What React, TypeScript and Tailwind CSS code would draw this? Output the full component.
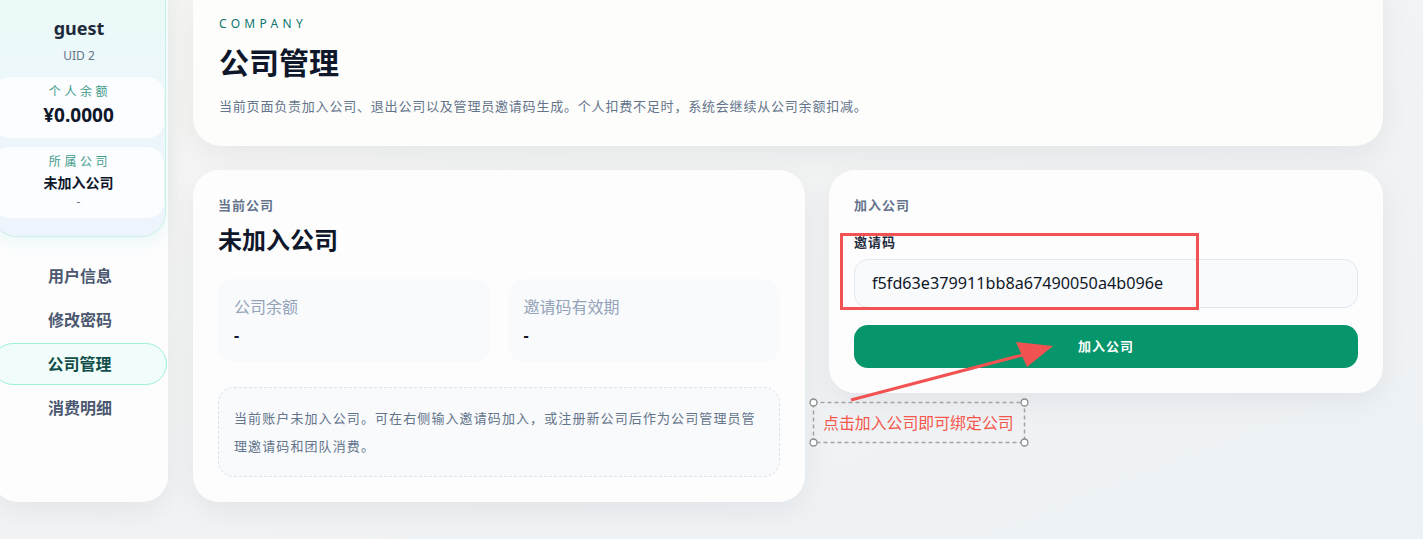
import React from "react";

const navItems = ["用户信息", "修改密码", "公司管理", "消费明细"];

function Sidebar() {
  return (
    <aside className="-ml-[8px] w-[176px] shrink-0 self-start rounded-[26px] bg-[#fdfdfe] pb-[73px] shadow-[0_10px_30px_rgba(15,23,42,0.06)]">
      {/* profile block */}
      <div className="mr-[2px] rounded-[24px] border border-[#c8f1ea] bg-gradient-to-b from-[#ebfaf8] to-[#eef4fc] pb-[18px] pt-[39px] shadow-[0_6px_16px_rgba(20,184,166,0.08)]">
        <div className="text-center text-[18px] font-bold leading-[24px] text-[#1e293b]">guest</div>
        <div className="mt-[8px] text-center text-[12px] leading-[16px] text-[#64748b]">UID 2</div>
        <div className="mr-[1px] mt-[13px] rounded-[16px] bg-[#fbfdff] pb-[10px] pt-[7px] text-center">
          <div className="pl-[3px] text-[12px] leading-[16px] tracking-[0.3em] text-[#3f9c8a]">个人余额</div>
          <div className="mt-[3px] text-[19px] font-bold leading-[25px] text-[#0f172a]">¥0.0000</div>
        </div>
        <div className="mr-[1px] mt-[9px] rounded-[16px] bg-[#fbfdff] pb-[7px] pt-[7px] text-center">
          <div className="pl-[3px] text-[12px] leading-[16px] tracking-[0.3em] text-[#3f9c8a]">所属公司</div>
          <div className="mt-[3px] text-[14px] font-bold leading-[20px] text-[#0f172a]">未加入公司</div>
          <div className="text-[12px] leading-[18px] text-[#64748b]">-</div>
        </div>
      </div>

      <nav className="mt-[18px] flex flex-col gap-[2px]">
        {navItems.map((item) => {
          const active = item === "公司管理";
          return (
            <div
              key={item}
              className={
                active
                  ? "mr-[1px] flex h-[42px] items-center justify-center rounded-[21px] border border-[#9ff0dd] bg-[#f0fdfa] text-[16px] font-bold text-[#134e4a]"
                  : "flex h-[42px] items-center justify-center text-[16px] font-bold text-[#4b5870]"
              }
            >
              {item}
            </div>
          );
        })}
      </nav>
    </aside>
  );
}

function StatBox({ label }: { label: string }) {
  return (
    <div className="rounded-[16px] bg-[#f8fafc] px-[16px] pb-[17px] pt-[18px]">
      <div className="text-[16px] leading-[20px] text-[#94a3b8]">{label}</div>
      <div className="mt-[8px] text-[16px] font-bold leading-[20px] text-[#0f172a]">-</div>
    </div>
  );
}

function Annotations() {
  return (
    <>
      {/* red highlight around invite code */}
      <div className="pointer-events-none absolute left-[840px] top-[233px] h-[77px] w-[359px] border-[3px] border-[#f25252]" />
      <svg
        className="pointer-events-none absolute left-0 top-0"
        width="1423"
        height="539"
        viewBox="0 0 1423 539"
      >
        <line x1="851" y1="400" x2="1030" y2="353" stroke="#f25252" strokeWidth="3" />
        <polygon points="1053,346 1016,342 1027,367" fill="#f25252" />
        <rect x="813.5" y="402.5" width="211" height="40" fill="none" stroke="#a3a3a3" strokeWidth="1.5" strokeDasharray="4 3" />
        {[
          [813.5, 402.5],
          [1024.5, 402.5],
          [813.5, 442.5],
          [1024.5, 442.5],
        ].map(([cx, cy]) => (
          <circle key={`${cx}-${cy}`} cx={cx} cy={cy} r="3.5" fill="#ffffff" stroke="#8a8a8a" strokeWidth="1.3" />
        ))}
      </svg>
      <div className="pointer-events-none absolute left-[823px] top-[413px] text-[15.9px] leading-[20px] text-[#f5574b]">
        点击加入公司即可绑定公司
      </div>
    </>
  );
}

export default function App() {
  return (
    <div
      className="relative h-[539px] w-[1423px] overflow-hidden bg-gradient-to-br from-[#f7f7f4] via-[#f1f3f4] to-[#edf2f6]"
      style={{ fontFamily: '"Noto Sans", "Noto Sans CJK SC", sans-serif' }}
    >
      <div className="-mt-[24px] flex gap-[25px] pr-[40px]">
        <Sidebar />

        <main className="flex min-w-0 flex-1 flex-col gap-[24px]">
          <section className="rounded-[28px] bg-[#fdfdfc] px-[26px] pb-[30px] pt-[40px] shadow-[0_10px_30px_rgba(15,23,42,0.06)]">
            <div className="text-[12px] leading-[16px] tracking-[0.36em] text-[#0f766e]">COMPANY</div>
            <h1 className="mt-[12px] text-[30px] font-bold leading-[38px] text-[#0f172a]">公司管理</h1>
            <p className="mt-[14px] text-[13px] leading-[20px] tracking-[0.8px] text-[#64748b]">
              当前页面负责加入公司、退出公司以及管理员邀请码生成。个人扣费不足时，系统会继续从公司余额扣减。
            </p>
          </section>

          <div className="grid grid-cols-[612px_1fr] items-start gap-[24px]">
            <section className="rounded-[26px] bg-[#fdfdfe] px-[25px] pb-[25px] pt-[27px] shadow-[0_10px_30px_rgba(15,23,42,0.06)]">
              <div className="text-[13px] font-bold leading-[16px] tracking-[1px] text-[#64748b]">当前公司</div>
              <div className="mt-[11px] text-[24px] font-bold leading-[32px] text-[#0f172a]">未加入公司</div>
              <div className="mt-[23px] grid grid-cols-2 gap-[17px]">
                <StatBox label="公司余额" />
                <StatBox label="邀请码有效期" />
              </div>
              <div className="mt-[25px] rounded-[16px] border border-dashed border-[#dbe3ec] bg-[#f8fafc] px-[15px] pb-[16px] pt-[16px] text-[13px] leading-[28px] tracking-[1.1px] text-[#64748b]">
                当前账户未加入公司。可在右侧输入邀请码加入，或注册新公司后作为公司管理员管理邀请码和团队消费。
              </div>
            </section>

            <section className="rounded-[26px] bg-[#fdfdfe] px-[25px] pb-[25px] pt-[27px] shadow-[0_10px_30px_rgba(15,23,42,0.06)]">
              <div className="text-[13px] font-bold leading-[16px] tracking-[1px] text-[#64748b]">加入公司</div>
              <label className="mt-[21px] block text-[13px] font-bold leading-[16px] tracking-[1px] text-[#1e293b]">邀请码</label>
              <div className="mt-[9px] flex h-[49px] items-center rounded-[14px] border border-[#e2e8f0] bg-[#f8fafc] px-[17px] text-[16.2px] text-[#111827]">
                f5fd63e379911bb8a67490050a4b096e
              </div>
              <button
                type="button"
                className="mt-[17px] flex h-[43px] w-full items-center justify-center rounded-[14px] bg-[#07966b] text-[13px] font-bold tracking-[1px] text-white"
              >
                加入公司
              </button>
            </section>
          </div>
        </main>
      </div>

      <Annotations />
    </div>
  );
}
